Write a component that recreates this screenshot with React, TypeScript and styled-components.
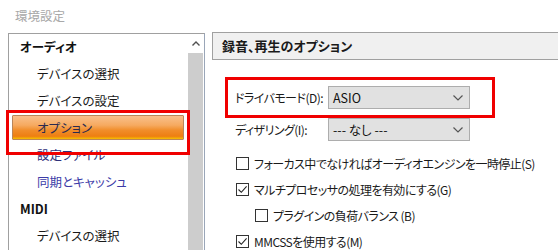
import React from "react";
import styled, { createGlobalStyle } from "styled-components";

const GlobalStyle = createGlobalStyle`
  html, body {
    margin: 0;
    padding: 0;
    background: #ffffff;
  }
  body {
    font-family: "Noto Sans CJK JP", "Noto Sans", sans-serif;
    font-size: 12.5px;
    color: #1a1a1a;
    font-feature-settings: "palt";
    white-space: nowrap;
  }
`;

const Window = styled.div`
  width: 558px;
  height: 250px;
  overflow: hidden;
`;

const Title = styled.div`
  height: 33px;
  padding-left: 15px;
  line-height: 32px;
  color: #a8a8a8;
`;

const Body = styled.div`
  display: flex;
  align-items: flex-start;
  padding-left: 8px;
`;

const LeftPanel = styled.div`
  width: 195px;
  height: 240px;
  display: flex;
  border: 1px solid #a0a0a0;
  border-right-color: #9aa6b8;
  border-bottom: none;
`;

const List = styled.div`
  flex: 1;
  display: flex;
  flex-direction: column;
`;

const Group = styled.div<{ $first?: boolean }>`
  height: ${(p) => (p.$first ? 26 : 27)}px;
  line-height: ${(p) => (p.$first ? 26 : 27)}px;
  padding-left: 11px;
  font-weight: bold;
  color: #111;
`;

const Item = styled.div<{ $color?: string }>`
  height: 27px;
  line-height: 27px;
  padding-left: 28px;
  color: ${(p) => p.$color || "#1a1a1a"};
`;

const SelectedItem = styled.div`
  position: relative;
  margin: 1px 4px 1px 3px;
  height: 23px;
  line-height: 23px;
  padding-left: 24px;
  color: #2a2a50;
  border: 1px solid #b9865a;
  border-radius: 1px;
  background: linear-gradient(
    to bottom,
    #f9c08c 0%,
    #f6aa60 40%,
    #f18d2a 62%,
    #ee7e12 88%,
    #f6c200 100%
  );
`;

const Annotation = styled.div<{ $inset: string }>`
  position: absolute;
  inset: ${(p) => p.$inset};
  border: 3px solid #f00000;
  pointer-events: none;
`;

const Scrollbar = styled.div`
  width: 16px;
  display: flex;
  flex-direction: column;
`;

const ScrollButton = styled.div`
  height: 19px;
  display: flex;
  align-items: center;
  justify-content: center;
  padding-right: 1px;
`;

const Thumb = styled.div`
  flex: 1;
  margin-right: 1px;
  background: #cdcdcd;
`;

const RightPanel = styled.div`
  flex: 1;
  margin-left: 7px;
  margin-top: -1px;
`;

const Header = styled.div`
  height: 26px;
  line-height: 26px;
  padding-left: 9px;
  font-weight: bold;
  font-size: 13px;
  background: #f0f0f0;
  border: 1px solid #a0a0a0;
  border-right: none;
`;

const Content = styled.div`
  padding: 17px 0 0 13px;
  font-size: 12px;
  letter-spacing: -0.55px;
`;

const DriverBox = styled.div`
  width: 250px;
  padding: 6px 7px;
  display: flex;
  align-items: center;
  border: 3px solid #f00000;
`;

const FieldRow = styled.div`
  display: flex;
  align-items: center;
  margin-left: 10px;
`;

const Label = styled.div`
  width: 93px;
  color: #1a1a1a;
`;

const Select = styled.div`
  width: 136px;
  height: 21px;
  padding-left: 4px;
  display: flex;
  align-items: center;
  justify-content: space-between;
  background: #e1e1e1;
  border: 1px solid #adadad;
  color: #111;
  font-size: 12.5px;
  letter-spacing: 0;
`;

const Chevron = styled.svg`
  margin-right: 6px;
`;

const Checks = styled.div`
  margin-top: 9px;
  margin-left: 11px;
  display: flex;
  flex-direction: column;
`;

const CheckRow = styled.label<{ $indent?: boolean }>`
  height: 26px;
  display: flex;
  align-items: center;
  gap: 5px;
  padding-left: ${(p) => (p.$indent ? 19 : 0)}px;
`;

const Box = styled.span`
  width: 11px;
  height: 11px;
  border: 1px solid #333;
  background: #fff;
  display: flex;
  align-items: center;
  justify-content: center;
`;

function Check({ checked, indent, children }: { checked?: boolean; indent?: boolean; children: React.ReactNode }) {
  return (
    <CheckRow $indent={indent}>
      <Box>
        {checked && (
          <svg width="11" height="11" viewBox="0 0 11 11">
            <path d="M1.5 5.5 L4.3 8.3 L9.6 2.4" fill="none" stroke="#222" strokeWidth="1.1" />
          </svg>
        )}
      </Box>
      <span>{children}</span>
    </CheckRow>
  );
}

function Dropdown({ value }: { value: string }) {
  return (
    <Select>
      <span>{value}</span>
      <Chevron width="10" height="6" viewBox="0 0 10 6">
        <path d="M0.5 0.5 L5 5 L9.5 0.5" fill="none" stroke="#555" strokeWidth="1.2" />
      </Chevron>
    </Select>
  );
}

export default function App() {
  return (
    <Window>
      <GlobalStyle />
      <Title>環境設定</Title>
      <Body>
        <LeftPanel>
          <List>
            <Group $first>オーディオ</Group>
            <Item>デバイスの選択</Item>
            <Item>デバイスの設定</Item>
            <SelectedItem>
              オプション
              <Annotation $inset="-6px -7px -16px -7px" />
            </SelectedItem>
            <Item $color="#30307a">設定ファイル</Item>
            <Item $color="#3c3ca8">同期とキャッシュ</Item>
            <Group>MIDI</Group>
            <Item>デバイスの選択</Item>
          </List>
          <Scrollbar>
            <ScrollButton>
              <svg width="8" height="5" viewBox="0 0 8 5">
                <path d="M0.5 4.5 L4 1 L7.5 4.5" fill="none" stroke="#505050" strokeWidth="1.4" />
              </svg>
            </ScrollButton>
            <Thumb />
          </Scrollbar>
        </LeftPanel>
        <RightPanel>
          <Header>録音、再生のオプション</Header>
          <Content>
            <DriverBox>
              <Label>ドライバモード(D):</Label>
              <Dropdown value="ASIO" />
            </DriverBox>
            <FieldRow>
              <Label>ディザリング(I):</Label>
              <Dropdown value="--- なし ---" />
            </FieldRow>
            <Checks>
              <Check>フォーカス中でなければオーディオエンジンを一時停止(S)</Check>
              <Check checked>マルチプロセッサの処理を有効にする(G)</Check>
              <Check indent>プラグインの負荷バランス (B)</Check>
              <Check checked>MMCSSを使用する(M)</Check>
            </Checks>
          </Content>
        </RightPanel>
      </Body>
    </Window>
  );
}
